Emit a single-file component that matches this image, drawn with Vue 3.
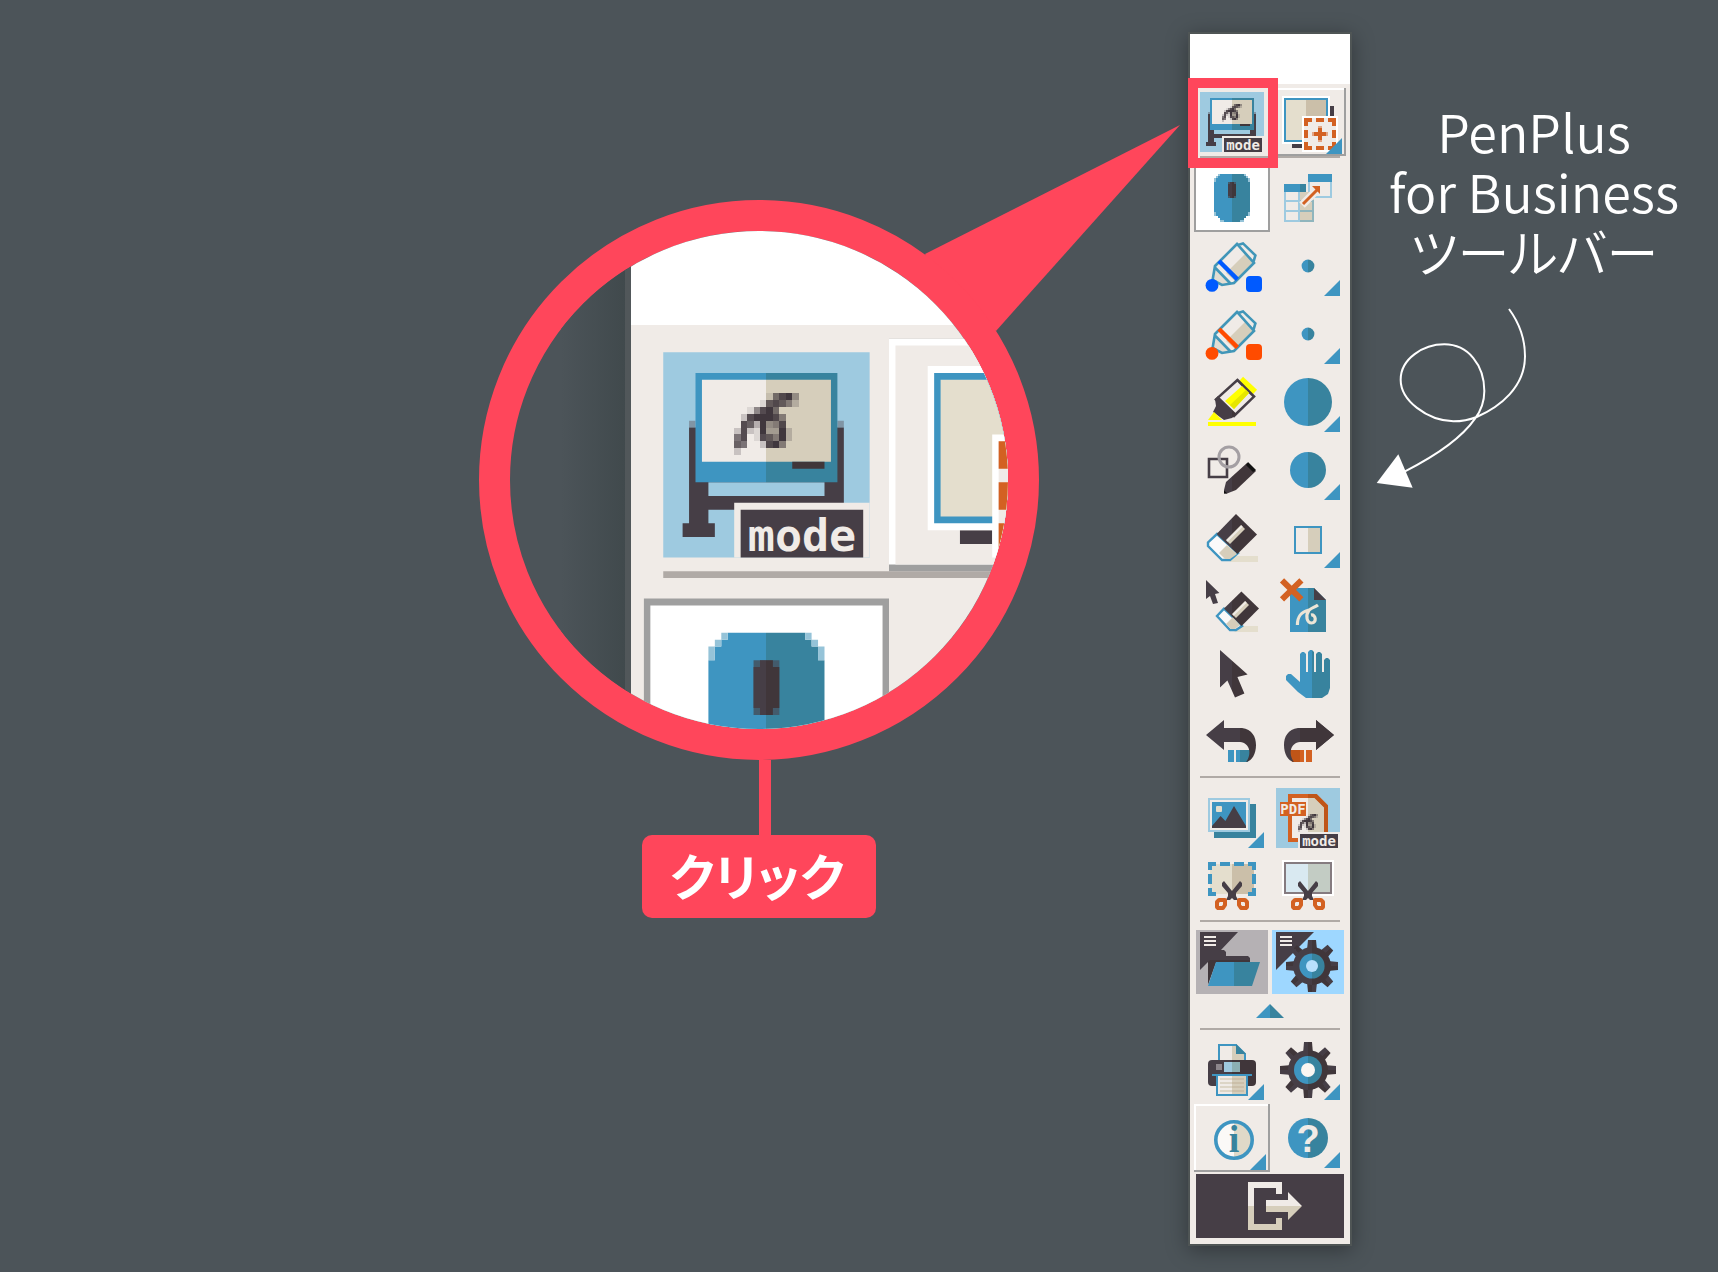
<script setup>
  // each entry is one row of the toolbar: [left, right]
  const groups = [
    {
      name: "board",
      rows: [
        [
          { icon: "board", label: "ボードモード", target: true },
          { icon: "board-add", label: "ボード追加", raised: true },
        ],
      ],
    },
    {
      name: "draw",
      rows: [
        [
          { icon: "mouse", label: "マウス", active: true },
          { icon: "table", label: "表" },
        ],
        [
          { icon: "pen", label: "青ペン", color: "#005aff" },
          { icon: "dot", label: "ペンの太さ", menu: true },
        ],
        [
          { icon: "pen", label: "赤ペン", color: "#ff4b00" },
          { icon: "dot", label: "ペンの太さ", menu: true },
        ],
        [
          { icon: "marker", label: "蛍光ペン" },
          { icon: "disc-large", label: "蛍光ペンの太さ", menu: true },
        ],
        [
          { icon: "shape-pen", label: "図形ペン" },
          { icon: "disc", label: "図形ペンの太さ", menu: true },
        ],
        [
          { icon: "eraser", label: "消しゴム" },
          { icon: "square", label: "消しゴムの大きさ", menu: true },
        ],
        [
          { icon: "object-eraser", label: "オブジェクト消しゴム" },
          { icon: "clear", label: "全消去" },
        ],
        [
          { icon: "cursor", label: "選択" },
          { icon: "hand", label: "移動" },
        ],
        [
          { icon: "undo", label: "元に戻す" },
          { icon: "redo", label: "やり直し" },
        ],
      ],
    },
    {
      name: "capture",
      rows: [
        [
          { icon: "picture", label: "画像", menu: true },
          { icon: "pdf", label: "PDFモード" },
        ],
        [
          { icon: "cut-area", label: "範囲キャプチャ" },
          { icon: "cut-screen", label: "画面キャプチャ" },
        ],
      ],
    },
    {
      name: "custom",
      rows: [
        [
          { icon: "folder", label: "フォルダー" },
          { icon: "gear-tile", label: "カスタム設定" },
        ],
      ],
      fold: true,
    },
    {
      name: "system",
      rows: [
        [
          { icon: "printer", label: "印刷", menu: true },
          { icon: "gear", label: "設定", menu: true },
        ],
        [
          { icon: "info", label: "情報", raised: true },
          { icon: "help", label: "ヘルプ", menu: true },
        ],
      ],
    },
  ]

  // ink strength of every dot in the handwriting mark, 0 to 9
  const scribbleRows = [
    "0000016894",
    "0000178752",
    "0015896000",
    "0289998500",
    "0873945800",
    "2821933920",
    "6801875920",
    "7600289500",
    "2000000000",
  ]

  const scribble = scribbleRows.flatMap((row, y) =>
    [...row].map((ink, x) => ({ x, y, ink: ink / 9 })).filter((dot) => dot.ink > 0)
  )

  const teeth = [0, 45, 90, 135, 180, 225, 270, 315]
</script>

<template>
  <div class="page">
    <svg class="sprite" aria-hidden="true">
      <defs>
        <linearGradient id="blue" gradientUnits="userSpaceOnUse" x1="0" x2="38">
          <stop offset="0.5" stop-color="#3e95c1" />
          <stop offset="0.5" stop-color="#38839e" />
        </linearGradient>
        <linearGradient id="blue-hand" gradientUnits="userSpaceOnUse" x1="0" x2="42">
          <stop offset="0.5" stop-color="#3e95c1" />
          <stop offset="0.5" stop-color="#38839e" />
        </linearGradient>
        <linearGradient id="ink" gradientUnits="userSpaceOnUse" x1="0" x2="38">
          <stop offset="0.5" stop-color="#463e46" />
          <stop offset="0.5" stop-color="#40363a" />
        </linearGradient>
        <linearGradient id="ink-undo" gradientUnits="userSpaceOnUse" x1="0" x2="46">
          <stop offset="0.5" stop-color="#463e46" />
          <stop offset="0.5" stop-color="#40363a" />
        </linearGradient>
        <linearGradient id="paper" gradientUnits="userSpaceOnUse" x1="0" x2="38">
          <stop offset="0.5" stop-color="#f0ebe7" />
          <stop offset="0.5" stop-color="#d6cebb" />
        </linearGradient>
        <linearGradient id="sand" gradientUnits="userSpaceOnUse" x1="0" x2="38">
          <stop offset="0.5" stop-color="#e4decd" />
          <stop offset="0.5" stop-color="#cbbfa9" />
        </linearGradient>
        <linearGradient id="glass" gradientUnits="userSpaceOnUse" x1="0" x2="38">
          <stop offset="0.5" stop-color="#d9e9f1" />
          <stop offset="0.5" stop-color="#c3ccc4" />
        </linearGradient>
        <linearGradient id="coin" gradientUnits="userSpaceOnUse" x1="0" x2="40">
          <stop offset="0.5" stop-color="#fbf9f7" />
          <stop offset="0.5" stop-color="#e0d9c8" />
        </linearGradient>
        <linearGradient id="exit" gradientUnits="userSpaceOnUse" x1="0" x2="0" y1="0" y2="34">
          <stop offset="0.5" stop-color="#f0ebe7" />
          <stop offset="0.5" stop-color="#d6cebb" />
        </linearGradient>
        <linearGradient id="shade" x1="0" x2="1">
          <stop offset="0" stop-color="#4c5459" />
          <stop offset="1" stop-color="#40494c" />
        </linearGradient>
      </defs>

      <g id="scribble" shape-rendering="crispEdges">
        <rect
          v-for="dot in scribble"
          :key="`${dot.x}-${dot.y}`"
          :x="dot.x"
          :y="dot.y"
          width="1"
          height="1"
          fill="#40373d"
          :fill-opacity="dot.ink"
        />
      </g>

      <path id="corner" d="M27 32L35 24V32Z" fill="#3e95c1" />

      <g id="label-plate">
        <path d="M14 24H35V32H14Z" fill="#f0ebe7" />
        <path d="M15 25H34V32H15Z" fill="#463e46" />
      </g>

      <g id="board">
        <path d="M3 2H35V32H3Z" fill="#9ecae0" />
        <path d="M7 12H8V13H7ZM30 12H31V13H30Z" fill="#8095a5" />
        <path d="M7 13H31V25H28V21H10V23H28V25H10V27H11V29H6V27H7Z" fill="#463e46" />
        <path d="M8 5H30V21H8Z" fill="url(#blue)" />
        <path d="M9 6H29V18H9Z" fill="url(#paper)" />
        <path d="M23 18H28V19H23Z" fill="#40363a" />
        <use href="#scribble" x="14" y="8" />
        <use href="#label-plate" />
      </g>

      <g id="board-add">
        <path d="M30 9H32V14H30ZM11 28H16V30H11Z" fill="#463e46" />
        <path d="M6 4H30V28H6Z" fill="#fff" />
        <path d="M7 5H29V27H7Z" fill="#3e95c1" />
        <path d="M8 6H28V26H8Z" fill="#e4decd" />
        <path d="M18 6H28V26H18Z" fill="#cbbfa9" />
        <path d="M16 14H34V32H16Z" fill="#fff" />
        <path d="M17 15H33V31H17Z" fill="#f0ebe7" />
        <path
          d="M17 15h4v2h-2v2h-2zM23 15h4v2h-4zM29 15h4v4h-2v-2h-2zM17 21h2v4h-2zM31 21h2v4h-2zM17 27h2v2h2v2h-4zM23 29h4v2h-4zM31 27h2v4h-4v-2h2z"
          fill="#d36122"
        />
        <path d="M24 20h2v2h2v2h-2v2h-2v-2h-2v-2h2z" fill="#d36122" />
        <path d="M24 19h2v1h-2zM24 26h2v1h-2zM21 22h1v2h-1zM28 22h1v2h-1z" fill="#e2a685" />
        <path d="M28 33L36 25V33Z" fill="#3e95c1" />
      </g>

      <g id="mouse">
        <path
          d="M12 6H13V5H25V6H26V7H27V9H28V24H27V26H26V27H25V28H23V29H15V28H13V27H12V26H11V24H10V9H11V7H12Z"
          fill="url(#blue)"
        />
        <path
          d="M12 5h1v1h-1zM11 6h1v1h-1zM10 7h1v2h-1zM25 5h1v1h-1zM26 6h1v1h-1zM27 7h1v2h-1zM10 24h1v2h-1zM27 24h1v2h-1zM13 28h2v1h-2zM23 28h2v1h-2z"
          fill="#95c3d8"
        />
        <path d="M17 9H21V17H17Z" fill="#435b6c" />
        <path d="M18 9H20V10H21V16H20V17H18V16H17V10H18Z" fill="url(#ink)" />
      </g>

      <g id="table">
        <path d="M19.5 8.500H30.500V16.500H19.500Z" fill="#f0ebe7" stroke="#9ecae0" />
        <path d="M19 5H31V9H19Z" fill="#3e95c1" />
        <path d="M7 10H15V14H7Z" fill="#3e95c1" />
        <path d="M15 10H18V14H15Z" fill="#38839e" />
        <path d="M15 14H22V29H15Z" fill="#d6cebb" />
        <path d="M7.500 14V28.500H14.500V14M8 18.500H14M8 23.500H14" fill="none" stroke="#9ecae0" />
        <path d="M21.500 18V28.500H15M15 18.500H21M15 23.500H21" fill="none" stroke="#8fb5bd" />
        <path d="M16 20.500L24 12.500" stroke="#f0ebe7" stroke-width="4" />
        <path d="M16.500 20L24 12.500" stroke="#d36122" stroke-width="1.500" />
        <path d="M21 11H25V15Z" fill="#d36122" />
      </g>

      <g id="pen">
        <path d="M21 6.500L10.500 17L20 25L26 10.500Z" fill="#f0ebe7" />
        <path d="M11 18.500L18 25.500L14 26L10 23.500Z" fill="#e3ddd2" />
        <path d="M25.500 11L29.500 15.500L20.500 24.500L16 20.500Z" fill="#d6cebb" />
        <path
          d="M21.500 6L10.500 17L9.300 24L14 26.500L20 25.500L30 15.500Z M22 6.500L24.500 5.700L30.700 11.700L29.700 15M10.700 18L18 25.500"
          fill="none"
          stroke="#4196b8"
          stroke-width="1.300"
        />
        <circle cx="9" cy="26.700" r="3.200" fill="currentColor" />
        <path d="M12.500 14.500L21.700 23.700" stroke="currentColor" stroke-width="2.200" />
        <rect x="26" y="22" width="8" height="8" rx="2" fill="currentColor" />
      </g>

      <circle id="dot" cx="19" cy="17" r="3.200" fill="url(#blue)" />
      <circle id="disc" cx="19" cy="17" r="9" fill="url(#blue)" />
      <circle id="disc-large" cx="19" cy="17" r="12" fill="url(#blue)" />

      <g id="marker">
        <path d="M23.500 5.500L30.500 12" stroke="#ff0" stroke-width="3" />
        <path
          d="M21.700 6L30 14.300L20 24L11 15.700Z"
          fill="#f0ebe7"
          stroke="#463e46"
          stroke-width="1.300"
        />
        <path d="M24 9L27.500 12.500L20 20.500L15.500 16.500Z" fill="#ff0" />
        <path d="M26 11L27.500 12.500L20 20.500L18 18.500Z" fill="#e6e600" />
        <path d="M12 14L21.300 23L19 25L15 26L9.500 22L11 19L10.500 15.500Z" fill="url(#ink)" />
        <path d="M7 26L10 22L14 26Z" fill="#ff0" />
        <path d="M7 27H31V29H7Z" fill="#ff0" />
      </g>

      <g id="shape-pen">
        <path d="M7.500 11.500H16.500V20.500H7.500Z" fill="none" stroke="#463e46" stroke-width="1.300" />
        <circle cx="17.500" cy="10.500" r="5" fill="none" stroke="#a49fa3" stroke-width="1.500" />
        <path d="M26.500 13.500L31 17.500L21 27L16.500 28.700H15V27L16 23Z" fill="url(#ink)" />
        <path d="M27 13L31 17L29.500 18L26 14.500ZM15 27.300L16.700 28.700H15Z" fill="#111" />
      </g>

      <g id="eraser">
        <path d="M20 26H32V29H18Z" fill="#e4decd" />
        <path
          d="M11.500 15L7 19.200V21L14 28H18L22 24.500Z"
          fill="#fbfafa"
          stroke="#3e95c1"
          stroke-width="1.200"
        />
        <path d="M16.500 20.500L21.500 25L18 27.500H15.500L12.500 24.500Z" fill="#d6cebb" />
        <path d="M21 5L31.500 15.300L21.700 25L11.300 15Z" fill="url(#ink)" />
        <path d="M24.500 11.500L17 19" stroke="#d6cebb" stroke-width="2.800" />
        <path d="M24 11L16.500 18.500" stroke="#f0ebe7" />
      </g>

      <path id="square" d="M12.500 11.500H25.500V24.500H12.500Z" fill="url(#paper)" stroke="#3e95c1" />

      <g id="object-eraser">
        <path d="M6 4L12.700 10.500L10.500 11L12 15.500L9.500 16L8 12L6 13.500Z" fill="#463e46" />
        <path d="M23 27H32V30H20Z" fill="#e4decd" />
        <path
          d="M15 18.300L11.500 22L18 29H21L24 27Z"
          fill="#fbfafa"
          stroke="#3e95c1"
          stroke-width="1.200"
        />
        <path d="M19.500 22.500L23 26.500L20.500 28.500H18.500L16 26Z" fill="#d6cebb" />
        <path d="M23.700 9.700L32.500 18.300L23.800 27L15 18.300Z" fill="url(#ink)" />
        <path d="M26.500 15.500L20 22" stroke="#d6cebb" stroke-width="2.800" />
        <path d="M26 15L19.500 21.500" stroke="#f0ebe7" />
      </g>

      <g id="clear">
        <path d="M10 8H22L28 14V30H10Z" fill="url(#blue)" />
        <path d="M22 8L28 14H22Z" fill="#463e46" />
        <path
          d="M13.700 26.500C13.700 22 15.500 20 19.500 19C17.500 22 18.500 25.500 20.800 25.500C23.500 25.500 23 21 20.500 21.500M18.500 20.500C19.500 18 22 18 24 16.500"
          fill="none"
          stroke="#ece5d6"
          stroke-width="1.600"
        />
        <path d="M6 4.200L15.700 13.700M15.700 4.200L6 13.700" stroke="#d36122" stroke-width="3" />
      </g>

      <path
        id="cursor"
        d="M13 5L26.800 17.300L21.700 18.500L25.200 26.700L20.500 28.800L16.700 20.300L13 23.700Z"
        fill="url(#ink)"
      />

      <path
        id="hand"
        d="M15 7L16 6H17L18 7V16H19V6L20 5H21L22 6V16H23V7L24 6H25L26 7V16H27V10L28 9H29L30 10V24L29 27L26 29H18L14 26L8 20V18L9 17H10.500L15 21Z"
        fill="url(#blue-hand)"
      />

      <g id="undo">
        <path d="M17 21H20V27H17ZM21 21H23V27H21Z" fill="#3e95c1" />
        <path d="M23 21H29L27 27H23Z" fill="#38839e" />
        <path
          d="M6 13.500L15 6V10H24C29 10.500 31 14.500 31 18.500C31 23 29 26.500 26 27C29 23 28 17.500 23 17H15V21Z"
          fill="url(#ink-undo)"
        />
      </g>

      <g id="redo">
        <path d="M15 21H9L11 27H15Z" fill="#bf5518" />
        <path d="M15 21H17V27H15ZM18 21H21V27H18Z" fill="#d36122" />
        <path
          d="M32 13.500L23 6V10H14C9 10.500 7 14.500 7 18.500C7 23 9 26.500 12 27C9 23 10 17.500 15 17H23V21Z"
          fill="#463e46"
        />
        <path d="M32 13.500L23 6V10H15V17H23V21Z" fill="#40363a" />
      </g>

      <g id="picture">
        <path d="M10 10H31V27H10Z" fill="#38839e" />
        <path d="M7 7H28V24H7Z" fill="#9ecae0" />
        <path d="M8 8H27V23H8Z" fill="#f0ebe7" />
        <path d="M9 9H26V22H9Z" fill="#3e95c1" />
        <rect x="11" y="11" width="3" height="3" rx="0.500" fill="#e4decd" />
        <path d="M9 22V21L13.300 16L15.700 18.500L20 11L26 21V22Z" fill="#463e46" />
      </g>

      <g id="pdf">
        <path d="M3 2H35V32H3Z" fill="#9ecae0" />
        <path d="M10 6H23L28 11V28H10Z" fill="url(#paper)" stroke="#d36122" stroke-width="2" />
        <path d="M19 6H22.700L28 11.300V24" fill="none" stroke="#bf5518" stroke-width="2" />
        <path d="M5 9H18V16H5Z" fill="#d36122" />
        <use href="#scribble" x="14" y="15" />
        <use href="#label-plate" />
      </g>

      <g id="scissors">
        <path
          d="M14 15.500L15 14.500L19 19.500L23 14.500L24 15.500V17L21 20.500V22L22 24H20L19 23L18 24H16L17 22V20.500L14 17Z"
          fill="#463e46"
        />
        <path
          d="M12.500 24H15.500V26.500L14.500 28H12L11.500 27.500V25ZM25.500 24H22.500V26.500L23.500 28H26L26.500 27.500V25Z"
          fill="#f0ebe7"
          stroke="#d36122"
          stroke-width="2"
          stroke-linejoin="round"
        />
      </g>

      <g id="cut-area">
        <path d="M8 6H30V21H8Z" fill="url(#sand)" />
        <path
          d="M7 5h4v2h-2v2h-2zM13 5h5v2h-5zM20 5h5v2h-5zM27 5h4v4h-2v-2h-2zM7 11h2v5h-2zM29 11h2v5h-2zM7 18h2v2h2v2h-4zM29 18h2v4h-4v-2h2z"
          fill="#3e95c1"
        />
        <use href="#scissors" />
      </g>

      <g id="cut-screen">
        <path d="M6 4H32V22H6Z" fill="#fff" />
        <path d="M7.500 5.500H30.500V20.500H7.500Z" fill="url(#glass)" stroke="#857b80" />
        <use href="#scissors" />
      </g>

      <path id="menu-lines" d="M5 4H11V5H5ZM5 6H11V7H5ZM5 8H11V9H5Z" fill="#f0ebe7" />

      <g id="folder">
        <path d="M1 1H37V33H1Z" fill="#b5b1b4" />
        <path d="M3 2H22L13.500 11H15L16 12V14H27L28 15V17H11L7 28V17L3 21Z" fill="#463e46" />
        <path d="M8 16H28V17H11L7 28V17Z" fill="#40363a" />
        <path d="M11 17H20V29H7Z" fill="#3e95c1" />
        <path d="M20 17H33L29 29H20Z" fill="#38839e" />
        <use href="#menu-lines" />
      </g>

      <g id="gear-tile">
        <path d="M1 1H37V33H1Z" fill="#9ed7ff" />
        <path d="M3 2H22L3 21Z" fill="#463e46" />
        <circle cx="21" cy="19" r="11" fill="#9ed7ff" />
        <g transform="translate(2 2)">
          <path
            v-for="turn in teeth"
            :key="turn"
            d="M17 4H21L21.500 9H16.500Z"
            fill="url(#ink)"
            :transform="`rotate(${turn} 19 17)`"
          />
          <circle cx="19" cy="17" r="9.500" fill="url(#ink)" />
          <circle cx="19" cy="17" r="6.300" fill="url(#blue)" />
          <circle cx="19" cy="17" r="3" fill="#b9e0fc" />
        </g>
        <path d="M3 2H20L3 19Z" fill="#463e46" />
        <use href="#menu-lines" />
      </g>

      <g id="printer">
        <path d="M12.500 13V4.500H21L25.500 9V13" fill="url(#paper)" stroke="#3e95c1" />
        <path d="M21 4L26 9H21Z" fill="#38839e" />
        <rect x="7" y="12" width="24" height="13" rx="2" fill="url(#ink)" />
        <path d="M15 13H19V18H15Z" fill="#9ecae0" />
        <path d="M19 13H23V18H19Z" fill="#8bb0b4" />
        <path d="M11 14H14V17H11Z" fill="#8d868c" />
        <path d="M11.500 19.500H26.500V29.500H11.500Z" fill="url(#paper)" stroke="#3e95c1" />
        <path d="M9 19H29V20H9Z" fill="#3e95c1" />
        <path d="M13 21.500H19M13 23.500H19M13 25.500H19M13 27.500H19" stroke="#dcd5c6" />
        <path d="M19 21.500H25M19 23.500H25M19 25.500H25M19 27.500H25" stroke="#cbbfa9" />
      </g>

      <g id="gear">
        <path
          v-for="turn in teeth"
          :key="turn"
          d="M17 3H21L21.500 9H16.500Z"
          fill="url(#ink)"
          :transform="`rotate(${turn} 19 17)`"
        />
        <circle cx="19" cy="17" r="10" fill="url(#ink)" />
        <circle cx="19" cy="17" r="7" fill="url(#blue)" />
        <circle cx="19" cy="17" r="3.500" fill="#fbf6f2" />
      </g>

      <g id="info">
        <circle cx="20" cy="18" r="9.100" fill="url(#coin)" stroke="#3e95c1" stroke-width="1.800" />
        <path d="M28 33L36 25V33Z" fill="#3e95c1" />
      </g>

      <circle id="help" cx="19" cy="17" r="10" fill="url(#blue)" />
    </svg>

    <section class="guide">
      <div class="callout">
        <div class="lens-wrap">
          <svg class="pointer" viewBox="0 0 262 208" aria-hidden="true">
            <path d="M261 1L6 130L26 168L77 207Z" fill="#ff465b" />
          </svg>
          <div class="lens">
            <svg class="lens-view" viewBox="0 0 498 498" role="img" aria-label="ボードモード">
              <rect x="51" y="0" width="66" height="498" fill="url(#shade)" />
              <rect x="115" y="0" width="6" height="498" fill="#51575a" />
              <rect x="121" y="0" width="377" height="94" fill="#fff" />
              <rect x="121" y="94" width="377" height="404" fill="#f0ebe7" />
              <g transform="translate(121 94) scale(6.450 6.840)">
                <use href="#board" x="2" y="2" />
                <path d="M5 36H75V37H5Z" fill="#b0aaa6" />
                <path d="M40 2H78V36H40Z" fill="#9f9f9f" />
                <path d="M40 2H77V35H40Z" fill="#fff" />
                <path d="M41 3H77V35H41Z" fill="#f0ebe7" />
                <use href="#board-add" x="40" y="2" />
                <path d="M2 40H40V74H2Z" fill="#9f9f9f" />
                <path d="M3 41H39V73H3Z" fill="#fff" />
                <use href="#mouse" x="2" y="40" />
              </g>
              <text class="lens-mode" x="292" y="320" text-anchor="middle">mode</text>
            </svg>
          </div>
        </div>
        <div class="stem"></div>
        <div class="click-label">クリック</div>
      </div>
    </section>

    <nav class="toolbar" aria-label="PenPlus for Business">
      <div class="title-bar"></div>
      <div v-for="group in groups" :key="group.name" class="group">
        <div v-for="(row, i) in group.rows" :key="i" class="row">
          <button
            v-for="tool in row"
            :key="tool.icon"
            type="button"
            class="tool"
            :class="{ active: tool.active, raised: tool.raised, target: tool.target }"
            :aria-label="tool.label"
          >
            <svg viewBox="0 0 38 34" :color="tool.color">
              <use :href="`#${tool.icon}`" />
              <use v-if="tool.menu" href="#corner" />
              <text
                v-if="tool.icon === 'board' || tool.icon === 'pdf'"
                class="mode-text"
                x="24.500"
                y="31"
                text-anchor="middle"
              >mode</text>
              <text
                v-if="tool.icon === 'pdf'"
                class="mode-text"
                x="11.500"
                y="15"
                text-anchor="middle"
              >PDF</text>
              <text v-if="tool.icon === 'info'" class="info-text" x="20" y="24" text-anchor="middle">i</text>
              <text v-if="tool.icon === 'help'" class="help-text" x="19" y="24" text-anchor="middle">?</text>
            </svg>
          </button>
        </div>
        <button v-if="group.fold" type="button" class="fold" aria-label="折りたたむ">
          <svg viewBox="0 0 16 7">
            <path d="M1 7L7 1L8 0V7Z" fill="#3e95c1" />
            <path d="M8 0L9 1L15 7H8Z" fill="#38839e" />
          </svg>
        </button>
      </div>
      <button type="button" class="exit" aria-label="終了">
        <svg viewBox="0 0 28 24">
          <g transform="translate(0 -5)" fill="url(#exit)">
            <path d="M0 5H17V11H14V8H3V26H14V23H17V29H0Z" />
            <path d="M9 14H20V10L27 17L20 24V20H9Z" />
          </g>
        </svg>
      </button>
    </nav>

    <aside class="note">
      <p>PenPlus<br />for Business<br />ツールバー</p>
      <svg class="swirl" viewBox="45 650 456 549" aria-hidden="true">
        <path
          d="M447 656C483 705 495 750 495 798C495 890 420 950 350 980C325 990 300 993 280 993C200 990 122 930 122 868C122 805 190 762 253 762C325 762 373 825 373 902C373 935 360 965 345 985C300 1050 220 1100 135 1143"
          fill="none"
          stroke="#fff"
          stroke-width="6"
        />
        <path d="M115 1092L158 1192L50 1178Z" fill="#fff" />
      </svg>
    </aside>
  </div>
</template>

<style>
  body {
    margin: 0;
    background: #4c5459;
  }
</style>

<style scoped>
  .page {
    display: grid;
    grid-template-columns: 1fr 160px 368px;
    align-items: start;
    box-sizing: border-box;
    min-height: 100vh;
    padding: 34px 0 28px;
    background: #4c5459;
    color: #fff;
    font-family: "Noto Sans CJK JP", "Noto Sans", sans-serif;
    overflow: hidden;
  }

  .sprite {
    position: absolute;
    width: 0;
    height: 0;
  }

  .guide {
    display: flex;
    justify-content: flex-end;
    padding: 166px 151px 0 0;
  }

  .callout {
    display: flex;
    flex-direction: column;
    align-items: center;
  }

  .lens-wrap {
    position: relative;
  }

  .pointer {
    position: absolute;
    left: 440px;
    top: -76px;
    width: 262px;
    height: 208px;
  }

  .lens {
    position: relative;
    box-sizing: border-box;
    width: 560px;
    height: 560px;
    border: 31px solid #ff465b;
    border-radius: 50%;
    background: #4c5459;
    overflow: hidden;
  }

  .lens-view {
    display: block;
    width: 100%;
    height: 100%;
  }

  .lens-mode {
    fill: #f0ebe7;
    font: bold 45px "DejaVu Sans Mono", monospace;
  }

  .stem {
    width: 12px;
    height: 75px;
    margin-left: 12px;
    background: #ff465b;
  }

  .click-label {
    padding: 0 32px 4px 28px;
    border-radius: 10px;
    background: #ff465b;
    font-size: 50px;
    font-weight: 700;
    line-height: 79px;
    font-feature-settings: "palt";
  }

  .toolbar {
    padding-bottom: 4px;
    background: #f0ebe7;
    box-shadow:
      0 0 0 2px #4f5555,
      0 4px 20px 2px rgba(0, 0, 0, 0.35);
  }

  .title-bar {
    height: 50px;
    margin-bottom: 4px;
    background: #fff;
  }

  .group {
    padding: 0 4px;
  }

  .group:not(:last-of-type)::after {
    content: "";
    display: block;
    height: 2px;
    margin: 0 6px 6px;
    background: #b0aaa6;
  }

  .row {
    display: grid;
    grid-template-columns: 1fr 1fr;
  }

  button {
    padding: 0;
    border: none;
    background: none;
    cursor: pointer;
  }

  .tool {
    position: relative;
    height: 68px;
  }

  .tool svg {
    position: relative;
    display: block;
    width: 76px;
    height: 68px;
  }

  .tool.active {
    background: #fff;
    box-shadow: inset 0 0 0 2px #9f9f9f;
  }

  .tool.raised {
    box-shadow:
      inset -2px -2px #9f9f9f,
      inset 2px 2px #fff;
  }

  .tool.target::after {
    content: "";
    position: absolute;
    z-index: 1;
    left: -6px;
    top: -10px;
    width: 70px;
    height: 70px;
    border: 10px solid #ff465b;
  }

  .mode-text {
    fill: #f0ebe7;
    font: bold 7px "DejaVu Sans Mono", monospace;
  }

  .info-text {
    fill: #38839e;
    font: bold 19px "Liberation Serif", serif;
  }

  .help-text {
    fill: #f0ebe7;
    font: bold 19px "Liberation Sans", sans-serif;
  }

  .fold {
    display: flex;
    justify-content: center;
    width: 100%;
    height: 32px;
    padding-top: 8px;
  }

  .fold svg {
    width: 32px;
    height: 14px;
  }

  .exit {
    display: flex;
    justify-content: center;
    align-items: center;
    width: 148px;
    height: 64px;
    margin: 2px 6px;
    background: #463e46;
  }

  .exit svg {
    width: 56px;
    height: 48px;
    margin-left: 12px;
  }

  .note {
    display: flex;
    flex-direction: column;
    align-items: center;
    padding-top: 67px;
  }

  .note p {
    margin: 0;
    font-size: 52px;
    font-weight: 350;
    line-height: 60px;
    text-align: center;
    font-feature-settings: "palt";
  }

  .swirl {
    align-self: flex-start;
    width: 152px;
    height: 183px;
    margin: 26px 0 0 25px;
  }
</style>
